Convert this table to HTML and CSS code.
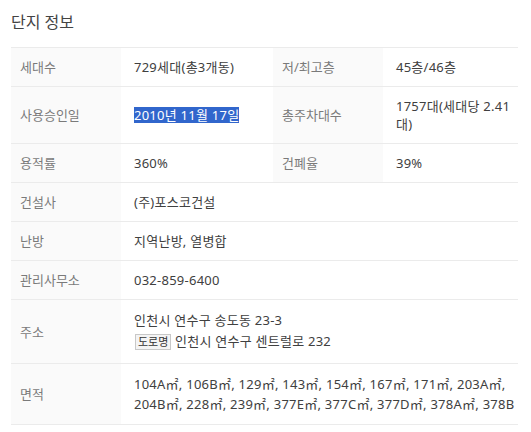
FILE: index.html
```html
<!DOCTYPE html>
<html lang="ko">
<head>
<meta charset="utf-8">
<link rel="stylesheet" href="styles.css">
</head>
<body>
<div class="wrap">
  <h2 class="title">단지 정보</h2>
  <div class="grid">
    <div class="lb">세대수</div>
    <div class="val">729세대(총3개동)</div>
    <div class="lb">저/최고층</div>
    <div class="val">45층/46층</div>

    <div class="lb">사용승인일</div>
    <div class="val"><span class="sel">2010년 11월 17일</span></div>
    <div class="lb">총주차대수</div>
    <div class="val">1757대(세대당 2.41 대)</div>

    <div class="lb">용적률</div>
    <div class="val">360%</div>
    <div class="lb">건폐율</div>
    <div class="val">39%</div>

    <div class="lb">건설사</div>
    <div class="val wide">(주)포스코건설</div>

    <div class="lb">난방</div>
    <div class="val wide">지역난방, 열병합</div>

    <div class="lb">관리사무소</div>
    <div class="val wide">032-859-6400</div>

    <div class="lb">주소</div>
    <div class="val wide addr">
      <div class="line1">인천시 연수구 송도동 23-3</div>
      <div class="line2"><span class="badge">도로명</span> 인천시 연수구 센트럴로 232</div>
    </div>

    <div class="lb">면적</div>
    <div class="val wide area">
      <div class="aline">104A㎡, 106B㎡, 129㎡, 143㎡, 154㎡, 167㎡, 171㎡, 203A㎡,</div>
      <div class="aline">204B㎡, 228㎡, 239㎡, 377E㎡, 377C㎡, 377D㎡, 378A㎡, 378B</div>
    </div>
  </div>
</div>
</body>
</html>
```

FILE: styles.css
```css
* { box-sizing: border-box; }
html, body { margin: 0; padding: 0; background: #fff; }
body {
  font-family: "Noto Sans", "Noto Sans CJK KR", sans-serif;
  font-size: 13px;
  color: #333;
}
.wrap { padding-left: 11px; width: 518px; }
.title {
  margin: 0;
  padding-top: 12px;
  height: 47px;
  font-size: 16px;
  line-height: 20px;
  font-weight: normal;
  color: #444;
}
.grid {
  display: grid;
  grid-template-columns: 110px 152px 110px 135px;
  border-top: 1px solid #ebebeb;
}
.lb, .val {
  border-bottom: 1px solid #ebebeb;
  padding: 10px 4px 10px 13px;
  line-height: 18px;
  display: flex;
  align-items: center;
}
.lb {
  background: #fafafa;
  color: #7a7a7a;
  padding-left: 9px;
}
.val { color: #404040; letter-spacing: 0.25px; }
.wide { grid-column: span 3; }
.sel {
  background: #3166cc;
  color: #fff;
  line-height: 16px;
  display: inline-block;
}
.addr, .area { flex-direction: column; align-items: flex-start; justify-content: center; }
.line1 { line-height: 20px; }
.line2 { line-height: 23px; }
.badge {
  display: inline-block;
  border: 1px solid #c8c8c8;
  background: #f4f4f4;
  font-size: 11px;
  line-height: 14px;
  padding: 0 2px;
  margin-left: 1px;
  letter-spacing: 0;
  color: #333;
}
.aline { line-height: 20px; white-space: nowrap; }
.area { overflow: hidden; }
```
